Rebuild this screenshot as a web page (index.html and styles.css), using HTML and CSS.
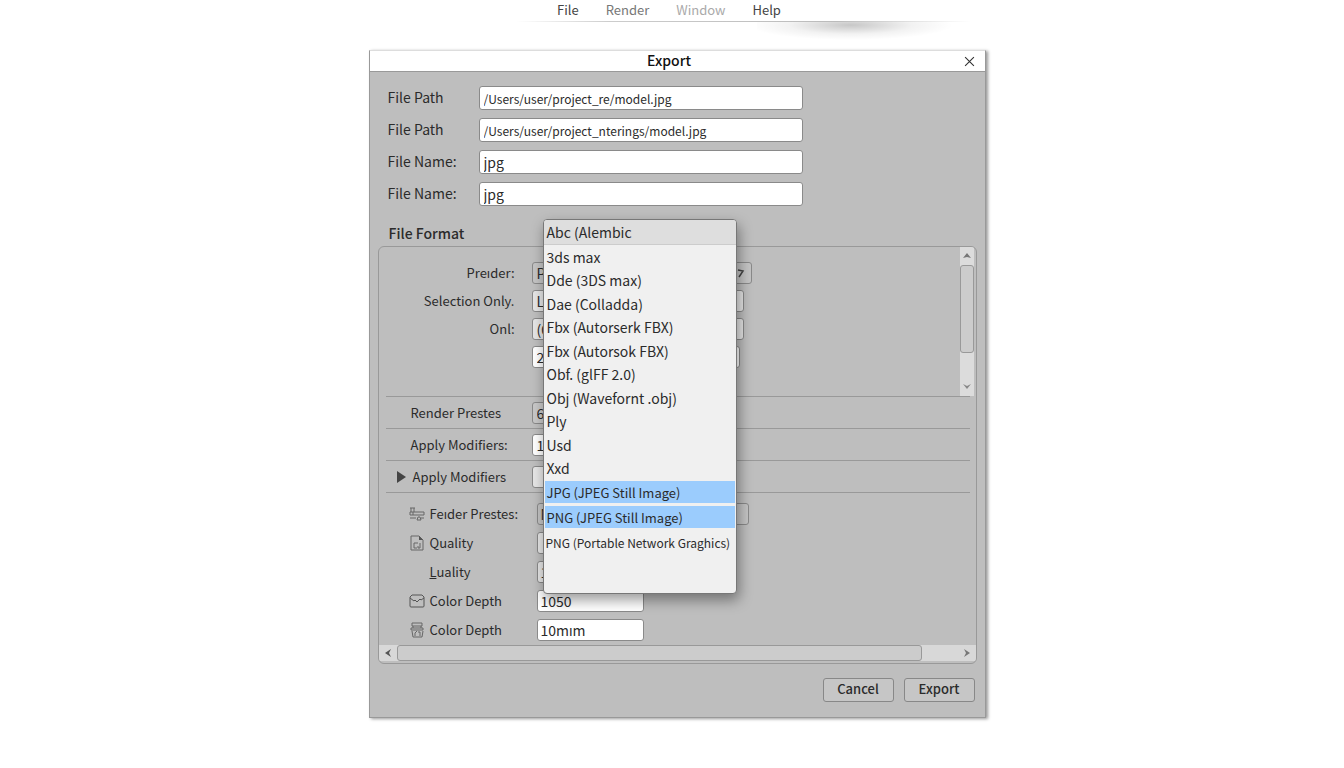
FILE: index.html
```html
<!DOCTYPE html>
<html lang="en">
<head>
  <meta charset="UTF-8">
  <title>Export</title>
  <meta name="viewport" content="width=device-width, initial-scale=1.0">
  <link rel="stylesheet" href="styles.css">
</head>
<body>

  <nav class="menu-bar">
    <button>File</button>
    <button class="soft">Render</button>
    <button class="faded">Window</button>
    <button>Help</button>
  </nav>

  <main class="dialog">
    <header class="title-bar">
      <h1>Export</h1>
      <button class="close-btn" aria-label="Close">
        <svg width="11" height="11" viewBox="0 0 10 10"><path d="M1 1l8 8M9 1l-8 8" fill="none" stroke="#333" stroke-width="1"/></svg>
      </button>
    </header>

    <section class="file-form">
      <label for="path1">File Path</label>
      <input class="path" type="text" id="path1" value="/Users/user/project_re/model.jpg">
      <label for="path2">File Path</label>
      <input class="path" type="text" id="path2" value="/Users/user/project_nterings/model.jpg">
      <label for="name1">File Name:</label>
      <input type="text" id="name1" value="jpg">
      <label for="name2">File Name:</label>
      <input type="text" id="name2" value="jpg">
    </section>

    <div class="format-row">
      <label for="format">File Format</label>
      <select class="format-list" id="format" multiple size="14">
        <option class="current">Abc (Alembic</option>
        <option>3ds max</option>
        <option>Dde (3DS max)</option>
        <option>Dae (Colladda)</option>
        <option>Fbx (Autorserk FBX)</option>
        <option>Fbx (Autorsok FBX)</option>
        <option>Obf. (glFF 2.0)</option>
        <option>Obj (Wavefornt .obj)</option>
        <option>Ply</option>
        <option>Usd</option>
        <option>Xxd</option>
        <option selected>JPG (JPEG Still Image)</option>
        <option selected>PNG (JPEG Still Image)</option>
        <option class="long">PNG (Portable Network Graghics)</option>
      </select>
    </div>

    <section class="panel">
      <div class="scroll-area">
        <div class="fields">
          <label for="preset">Preıder:</label>
          <span class="picker">
            <select id="preset"><option>Preset</option></select>
            <svg width="8" height="10" viewBox="0 0 8 10"><path d="M1 2l5 1-4 6" fill="none" stroke="#444" stroke-width="1.5"/></svg>
          </span>
          <label for="selection">Selection Only.</label>
          <input class="pale" type="text" id="selection" value="Last">
          <label for="only">Onl:</label>
          <input class="pale" type="text" id="only" value="(0)">
          <input class="short" type="text" aria-label="Count" value="24">
        </div>
        <div class="v-scroll">
          <button aria-label="Scroll up"><svg width="8" height="6" viewBox="0 0 8 6"><path d="M0 5l4-5 4 5-4-1z" fill="#777"/></svg></button>
          <div class="thumb"></div>
          <button aria-label="Scroll down"><svg width="8" height="6" viewBox="0 0 8 6"><path d="M0 0l4 2 4-2-4 5z" fill="#888"/></svg></button>
        </div>
      </div>

      <div class="line-row">
        <label for="render">Render Prestes</label>
        <input class="grey" type="text" id="render" value="6">
      </div>
      <div class="line-row">
        <label for="modifiers1">Apply Modifiers:</label>
        <input type="text" id="modifiers1" value="1">
      </div>
      <div class="line-row">
        <label for="modifiers2"><svg class="arrow" width="9" height="12" viewBox="0 0 9 12"><path d="M0 0l9 6-9 6z" fill="#444"/></svg>Apply Modifiers</label>
        <input class="pale" type="text" id="modifiers2" value="">
      </div>

      <div class="options">
        <svg width="16" height="16" viewBox="0 0 16 16"><path d="M1 2h5M2 2v4M5 2v4M1 6h14v3H1zM1 12h6M8 14l1-3h2l1 3zM12 12h3M4 6v3" fill="none" stroke="#666"/></svg>
        <label for="fender">Feıder Prestes:</label>
        <select id="fender"><option>Medium</option></select>

        <svg width="16" height="16" viewBox="0 0 16 16"><path d="M2 1h8l4 4v10H2zM9 8H5v5h3M11 8v5H9v-2" fill="none" stroke="#666"/><path d="M10 1l4 4h-4z" fill="#555"/></svg>
        <label for="quality1">Quality</label>
        <input class="pale" type="text" id="quality1" value="">

        <span></span>
        <label for="quality2"><u>L</u>uality</label>
        <input class="pale" type="text" id="quality2" value="1">

        <svg width="16" height="16" viewBox="0 0 16 16"><path d="M3 2h10l2 2v9a1 1 0 0 1-1 1H2a1 1 0 0 1-1-1V4zM1 5l4 3 1-1 2 2 3-3 1 1 3-2" fill="none" stroke="#555"/></svg>
        <label for="depth1">Color Depth</label>
        <input type="text" id="depth1" value="1050">

        <svg width="16" height="16" viewBox="0 0 16 16"><path d="M3 1h10v3H3zM2 6h12v2H2zM4 4v2M12 4v2M3 9l1 6h9l1-6M6 14v-3l2-2M11 14v-4H9" fill="none" stroke="#666"/></svg>
        <label for="depth2">Color Depth</label>
        <input type="text" id="depth2" value="10mım">
      </div>

      <div class="h-scroll">
        <button aria-label="Scroll left"><svg width="6" height="8" viewBox="0 0 6 8"><path d="M6 0L0 4l6 4-2-4z" fill="#555"/></svg></button>
        <div class="thumb"></div>
        <button aria-label="Scroll right"><svg width="6" height="8" viewBox="0 0 6 8"><path d="M0 0l6 4-6 4 2-4z" fill="#777"/></svg></button>
      </div>
    </section>

    <footer class="actions">
      <button>Cancel</button>
      <button>Export</button>
    </footer>
  </main>

</body>
</html>
```

FILE: styles.css
```css
* {
  box-sizing: border-box;
}

body {
  margin: 0;
  padding-left: 10px;
  background: #fff;
  color: #2b2b2b;
}

body, button, input, select {
  font-family: "Noto Sans CJK SC", "Noto Sans", sans-serif;
  font-size: 14px;
  line-height: 20px;
}

button, input, select {
  margin: 0;
  color: inherit;
}

button {
  padding: 0;
  border: none;
  background: none;
}

svg {
  display: block;
}

.menu-bar {
  position: relative;
  display: flex;
  justify-content: center;
  gap: 27px;
  height: 22px;
  padding: 0 16px 3px 0;
  border-bottom: 1px solid;
  border-image: linear-gradient(90deg, transparent 38%, #ccc 45%, #bbb 62%, transparent 72%) 1;
}

.menu-bar button {
  color: #444;
  font-size: 13px;
}

.menu-bar .soft {
  color: #777;
}

.menu-bar .faded {
  color: #aaa;
}

/* shadow under the menu bar */
.menu-bar::after {
  content: "";
  position: absolute;
  top: 22px;
  left: 56%;
  width: 16%;
  height: 20px;
  background: radial-gradient(ellipse 48% 75% at 44% 15%, rgba(0, 0, 0, 0.22), rgba(0, 0, 0, 0.05) 60%, transparent);
}

.dialog {
  width: 46%;
  min-width: 617px;
  margin: 28px auto 48px;
  background: #bebebe;
  border: 1px solid #999;
  border-top-color: #ddd;
  box-shadow: 2px 1px 3px rgba(0, 0, 0, 0.4);
}

.title-bar {
  display: grid;
  grid-template-columns: 30px 1fr 30px;
  align-items: center;
  height: 21px;
  background: #fff;
  border-bottom: 1px solid #999;
}

.title-bar h1 {
  grid-column: 2;
  margin: 0;
  padding: 0 16px 2px 0;
  font-size: 14px;
  line-height: 18px;
  font-weight: 500;
  text-align: center;
  color: #111;
}

.close-btn {
  justify-self: center;
}

input, select {
  width: 100%;
  height: 22px;
  padding: 0 4px;
  border: 1px solid #8a8a8a;
  border-radius: 3px;
  background: #fff;
}

select {
  appearance: none;
  background: #c4c4c4;
}

.file-form {
  display: grid;
  grid-template-columns: 91px minmax(0, 324px);
  align-items: center;
  row-gap: 8px;
  padding: 14px 18px 0;
}

.file-form label {
  padding-bottom: 2px;
}

.file-form input {
  height: 24px;
}

.file-form .path {
  font-size: 12px;
}

.format-row {
  position: relative;
  padding: 17px 19px 3px;
  font-weight: 500;
}

.format-list {
  position: absolute;
  z-index: 1;
  top: 13px;
  left: 173px;
  width: 194px;
  height: 375px;
  padding: 0;
  overflow: hidden;
  border-color: #777;
  border-radius: 4px;
  background: #f0f0f0;
  box-shadow: 2px 6px 14px rgba(0, 0, 0, 0.4);
  font-weight: 400;
}

.format-list option {
  display: flex;
  align-items: center;
  height: 24px;
  min-height: 0;
  padding: 0 3px;
  color: #2b2b2b;
}

.format-list option:nth-child(even) {
  height: 23px;
}

.format-list .current {
  height: 25px;
  background: #dedede;
  border-bottom: 1px solid #ccc;
}

.format-list option:checked {
  height: 22px;
  margin: 1px 1px 3px;
  padding: 0 2px;
  background: linear-gradient(#9bccfd, #9bccfd);
  -webkit-text-fill-color: #2b2b2b;
  font-size: 13px;
}

.format-list .long {
  padding: 0 2px;
  font-size: 12px;
}

.panel {
  margin: 0 8px;
  border: 1px solid #999;
  border-radius: 6px;
  overflow: hidden;
}

.panel label {
  font-size: 13px;
}

.scroll-area {
  display: flex;
  justify-content: space-between;
  margin: 0 2px 0 7px;
}

.fields {
  display: grid;
  grid-template-columns: 129px 220px;
  column-gap: 17px;
  row-gap: 6px;
  align-items: center;
  padding: 15px 0 28px;
}

.fields label {
  text-align: right;
}

.fields input {
  width: 212px;
}

.fields .short {
  grid-column: 2;
  width: 208px;
}

.picker {
  position: relative;
}

.picker select {
  display: block;
}

.picker svg {
  position: absolute;
  right: 7px;
  top: 6px;
}

input.pale {
  background: #e6e6e6;
}

input.grey {
  background: #c8c8c8;
}

.v-scroll {
  display: flex;
  flex-direction: column;
  width: 14px;
  background: #dcdcdc;
}

.v-scroll button,
.h-scroll button {
  display: flex;
  align-items: center;
  justify-content: center;
}

.v-scroll button {
  height: 18px;
}

.v-scroll button:last-child {
  margin-top: auto;
}

.thumb {
  border: 1px solid #999;
  border-radius: 3px;
  background: #ccc;
}

.v-scroll .thumb {
  height: 88px;
}

.line-row {
  display: grid;
  grid-template-columns: 121px 110px;
  align-items: center;
  height: 32px;
  margin: 0 6px 0 7px;
  padding-left: 25px;
  border-top: 1px solid #999;
}

.line-row label {
  display: flex;
  align-items: center;
}

.arrow {
  margin: 0 7px 0 -14px;
}

.options {
  display: grid;
  grid-template-columns: 16px 102px 107px;
  column-gap: 5px;
  row-gap: 7px;
  align-items: center;
  margin: 0 6px 0 7px;
  padding: 10px 0 4px 23px;
  border-top: 1px solid #999;
}

.options input,
.options select {
  padding: 0 3px;
}

.options select {
  width: 212px;
}

.h-scroll {
  display: flex;
  height: 16px;
  margin-bottom: 2px;
  background: #d8d8d8;
}

.h-scroll button {
  width: 18px;
}

.h-scroll .thumb {
  width: 88%;
}

.h-scroll button:last-child {
  margin-left: auto;
}

.actions {
  display: flex;
  justify-content: flex-end;
  gap: 10px;
  padding: 14px 10px 15px;
}

.actions button {
  width: 71px;
  height: 24px;
  padding-bottom: 2px;
  border: 1px solid #888;
  border-radius: 3px;
  background: #c6c6c6;
  font-size: 13px;
  font-weight: 500;
}
```
